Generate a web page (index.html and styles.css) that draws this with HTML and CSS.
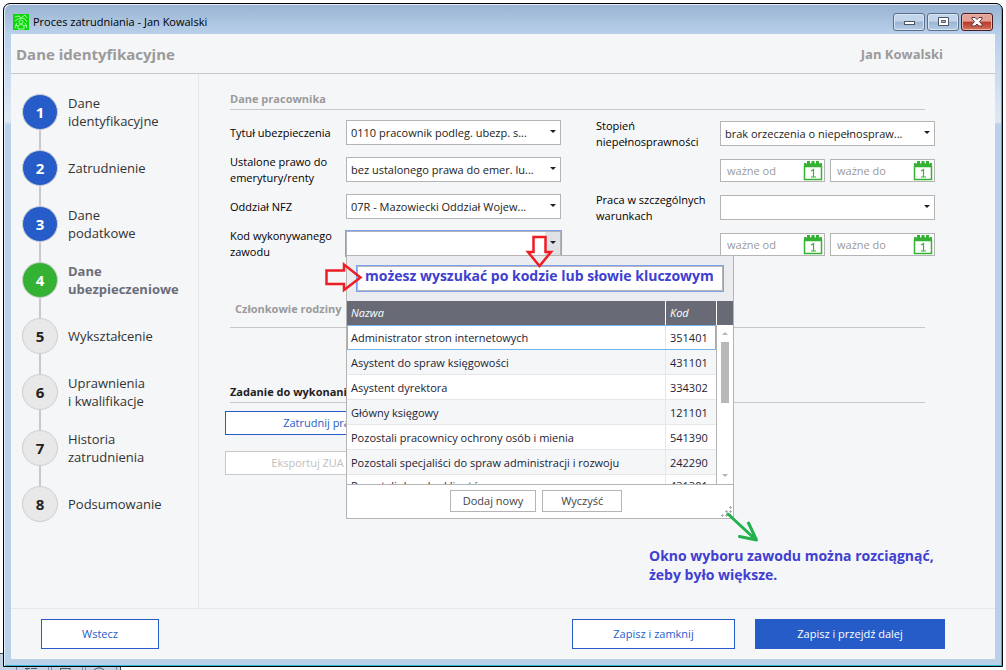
FILE: index.html
```html
<!DOCTYPE html>
<html lang="pl">
<head>
    <meta charset="UTF-8">
    <meta name="viewport" content="width=device-width, initial-scale=1.0">
    <link rel="stylesheet" href="styles.css">
    <title>Proces zatrudniania - Jan Kowalski</title>
</head>
<body>
    <!-- toolbar of the program behind the window -->
    <svg class="back-toolbar" width="121" height="17" viewBox="0 0 121 17" aria-hidden="true">
        <path d="M0 0h120v17H0z" fill="#c3d3e6"/>
        <path d="M0 .5h120.500V17" fill="none" stroke="#444"/>
        <path d="M16.500 10v7M48.500 10v7M51.500 10v7M82.500 10v7M85.500 10v7M116.500 10v7" stroke="#7d8fa8"/>
        <path d="M25 15.500h5M27 17v-2M31 15.500h6M60 15.500h10M60.500 17v-2M70 17v-2M94 17l3-2h4l3 2" fill="none" stroke="#555"/>
    </svg>

    <div class="window">
        <div class="titlebar">
            <svg class="app-icon" width="16" height="16" viewBox="0 0 16 16" aria-hidden="true">
                <path d="M0 0h16v16H0z" fill="#0bd80b"/>
                <path d="M2 3l4-1 2 2 4-3 2 3M2 7l3-2 3-1 4 1 2 3M8 6a2 2 0 1 0 .1 0M4 9l-2 5M12 9l2 5M5 15v-3l3-2 3 2v3zM2 11l3 1M14 11l-3 1" fill="none" stroke="#a6f7a0"/>
            </svg>
            <span class="titlebar-text">Proces zatrudniania - Jan Kowalski</span>
            <div class="window-buttons">
                <button class="win-btn" aria-label="Minimalizuj">
                    <svg width="12" height="10" viewBox="0 0 12 10"><rect x="1.500" y="4.500" width="10" height="3" fill="#fff" stroke="#4d5560"/></svg>
                </button>
                <button class="win-btn" aria-label="Maksymalizuj">
                    <svg width="12" height="10" viewBox="0 0 12 10"><path d="M1.500 .5h10v8h-10zM4.500 3.500v2h4v-2z" fill="#fff" fill-rule="evenodd" stroke="#4d5560"/></svg>
                </button>
                <button class="win-btn win-btn-close" aria-label="Zamknij">
                    <svg width="12" height="10" viewBox="0 0 12 10"><path d="M1 .5h3l2 2 2-2h3v1.500L8.500 4.500 11 7.500v1.500H8L6 7 4 9H1V7.500l2.500-3L1 2z" fill="#fff" stroke="#5b3a3f"/></svg>
                </button>
            </div>
        </div>

        <div class="client">
            <header class="page-header">
                <h1>Dane identyfikacyjne</h1>
                <span class="person">Jan Kowalski</span>
            </header>

            <div class="content">
                <ol class="steps">
                    <li class="step done"><span class="step-number">1</span><span>Dane<br>identyfikacyjne</span></li>
                    <li class="step done"><span class="step-number">2</span><span>Zatrudnienie</span></li>
                    <li class="step done"><span class="step-number">3</span><span>Dane<br>podatkowe</span></li>
                    <li class="step current"><span class="step-number">4</span><span>Dane<br>ubezpieczeniowe</span></li>
                    <li class="step"><span class="step-number">5</span><span>Wykształcenie</span></li>
                    <li class="step"><span class="step-number">6</span><span>Uprawnienia<br>i kwalifikacje</span></li>
                    <li class="step"><span class="step-number">7</span><span>Historia<br>zatrudnienia</span></li>
                    <li class="step"><span class="step-number">8</span><span>Podsumowanie</span></li>
                </ol>

                <main class="main">
                    <h2 class="section-title">Dane pracownika</h2>
                    <div class="form">
                        <div class="form-column">
                            <div class="row">
                                <label for="tytul">Tytuł ubezpieczenia</label>
                                <div class="select">
                                    <select id="tytul"><option>0110 pracownik podleg. ubezp. s...</option></select>
                                </div>
                            </div>
                            <div class="row">
                                <label for="prawo">Ustalone prawo do emerytury/renty</label>
                                <div class="select">
                                    <select id="prawo"><option>bez ustalonego prawa do emer. lu...</option></select>
                                </div>
                            </div>
                            <div class="row">
                                <label for="nfz">Oddział NFZ</label>
                                <div class="select">
                                    <select id="nfz"><option>07R - Mazowiecki Oddział Wojew...</option></select>
                                </div>
                            </div>
                            <div class="row">
                                <label for="kod">Kod wykonywanego zawodu</label>
                                <div class="select open">
                                    <select id="kod"><option></option></select>

                                    <div class="popup">
                                        <div class="popup-search">
                                            <input type="text" class="search-input" aria-label="Szukaj zawodu" value="możesz wyszukać po kodzie lub słowie kluczowym">
                                        </div>
                                        <div class="popup-list">
                                            <table class="jobs">
                                                <thead>
                                                    <tr><th>Nazwa</th><th class="code">Kod</th></tr>
                                                </thead>
                                                <tbody>
                                                    <tr class="selected"><td>Administrator stron internetowych</td><td>351401</td></tr>
                                                    <tr><td>Asystent do spraw księgowości</td><td>431101</td></tr>
                                                    <tr><td>Asystent dyrektora</td><td>334302</td></tr>
                                                    <tr><td>Główny księgowy</td><td>121101</td></tr>
                                                    <tr><td>Pozostali pracownicy ochrony osób i mienia</td><td>541390</td></tr>
                                                    <tr><td>Pozostali specjaliści do spraw administracji i rozwoju</td><td>242290</td></tr>
                                                    <tr><td>Pozostali doradcy klientów</td><td>431301</td></tr>
                                                </tbody>
                                            </table>
                                            <div class="scrollbar">
                                                <div class="scroll-head"></div>
                                                <div class="scroll-track">
                                                    <span class="scroll-arrow up"></span>
                                                    <span class="scroll-thumb"></span>
                                                    <span class="scroll-arrow down"></span>
                                                </div>
                                            </div>
                                        </div>
                                        <div class="popup-footer">
                                            <button class="small-btn">Dodaj nowy</button>
                                            <button class="small-btn">Wyczyść</button>
                                        </div>
                                        <svg class="grip" width="11" height="11" viewBox="0 0 11 11" aria-hidden="true">
                                            <path d="M8 1.500h3M9.500 0v3M4 5.500h3M5.500 4v3M8 5.500h3M9.500 4v3M0 9.500h3M1.500 8v3M4 9.500h3M5.500 8v3M8 9.500h3M9.500 8v3" stroke="#b0b0b0"/>
                                        </svg>

                                        <!-- hints: where to search, where to resize -->
                                        <svg class="hint-arrows" width="440" height="320" viewBox="0 0 440 320" aria-hidden="true">
                                            <path d="M213.500 7h12v15h5.500l-11.500 14-11.500-14h5.500z" fill="none" stroke="#ee1c24" stroke-width="2.500"/>
                                            <path d="M6.500 40.500h17.500v-6l16.500 13-16.500 12.500v-6h-17.500z" fill="none" stroke="#ee1c24" stroke-width="2.500"/>
                                            <path d="M408 284l28 26M428.500 293l8 17-17-3.500" fill="none" stroke="#22b14c" stroke-width="3" stroke-linecap="round" stroke-linejoin="round"/>
                                        </svg>
                                        <p class="hint-text">Okno wyboru zawodu można rozciągnąć,<br>żeby było większe.</p>
                                    </div>
                                </div>
                            </div>
                        </div>

                        <div class="form-column form-column-right">
                            <div class="row">
                                <label for="stopien">Stopień niepełnosprawności</label>
                                <div class="select">
                                    <select id="stopien"><option>brak orzeczenia o niepełnospraw...</option></select>
                                </div>
                            </div>
                            <div class="row">
                                <span></span>
                                <div class="dates">
                                    <div class="date">
                                        <input type="text" placeholder="ważne od" aria-label="Stopień niepełnosprawności ważne od">
                                        <button class="calendar" aria-label="Kalendarz"></button>
                                    </div>
                                    <div class="date">
                                        <input type="text" placeholder="ważne do" aria-label="Stopień niepełnosprawności ważne do">
                                        <button class="calendar" aria-label="Kalendarz"></button>
                                    </div>
                                </div>
                            </div>
                            <div class="row">
                                <label for="warunki">Praca w szczególnych warunkach</label>
                                <div class="select">
                                    <select id="warunki"><option></option></select>
                                </div>
                            </div>
                            <div class="row">
                                <span></span>
                                <div class="dates">
                                    <div class="date">
                                        <input type="text" placeholder="ważne od" aria-label="Praca w szczególnych warunkach ważne od">
                                        <button class="calendar" aria-label="Kalendarz"></button>
                                    </div>
                                    <div class="date">
                                        <input type="text" placeholder="ważne do" aria-label="Praca w szczególnych warunkach ważne do">
                                        <button class="calendar" aria-label="Kalendarz"></button>
                                    </div>
                                </div>
                            </div>
                        </div>
                    </div>

                    <h2 class="section-title family">Członkowie rodziny</h2>

                    <h2 class="section-title tasks">Zadanie do wykonania</h2>
                    <div class="task-buttons">
                        <button class="btn task-btn">Zatrudnij pracownika</button>
                        <button class="btn task-btn" disabled>Eksportuj ZUA do Płatnika</button>
                    </div>
                </main>
            </div>

            <footer class="page-footer">
                <button class="btn back">Wstecz</button>
                <button class="btn save">Zapisz i zamknij</button>
                <button class="btn next">Zapisz i przejdź dalej</button>
            </footer>
        </div>
    </div>

    <script>
        // every date field gets the same calendar icon
        document.querySelectorAll('.calendar').forEach((button) => {
            button.innerHTML = `
              <svg width="20" height="20" viewBox="0 0 20 20">
                <path d="M1.500 5.500h17v13h-17z" fill="#fff" stroke="#35b233" stroke-width="1.500"/>
                <path d="M1 2h18v4H1z" fill="#35b233"/>
                <path d="M5.500 0v3M10 0v3M14.500 0v3" stroke="#35b233" stroke-width="3"/>
                <path d="M3.500 1v1.500M7.500 1v1.500M12.500 1v1.500M16.500 1v1.500" stroke="#fff"/>
                <path d="M8 10l2.500-1.500V16M8 16h5" fill="none" stroke="#35b233" stroke-width="1.200"/>
              </svg>`;
        });
    </script>
</body>
</html>
```
FILE: styles.css
```css
* {
    box-sizing: border-box;
}

body {
    margin: 0;
    padding: 3px;
    min-height: 100vh;
    display: flex;
    background-color: #fff;
    font-family: "Open Sans", "Noto Sans", sans-serif;
    font-size: 11px;
    line-height: 16px;
    color: #1e1e1e;
}

button, input, select {
    font: inherit;
    color: inherit;
}

h1, h2, p, ol {
    margin: 0;
    padding: 0;
}

.back-toolbar {
    position: absolute;
    left: 0;
    bottom: 0;
}

/* window frame */
.window {
    position: relative;
    flex: 1;
    display: flex;
    flex-direction: column;
    padding: 0 7px 7px;
    border: 1px solid #000;
    border-radius: 7px 7px 0 0;
    background: linear-gradient(#98b3d1, #b9d0ea 30px, #dfe9f5 118px, #bad1ea 120px);
    box-shadow: inset 1px 1px #e4eefa, inset -1px -1px #2fb9d6;
}

.titlebar {
    display: flex;
    align-items: center;
    height: 30px;
    padding: 6px 2px 0;
    gap: 4px;
    color: #000;
}

.window-buttons {
    display: flex;
    gap: 2px;
    margin-left: auto;
}

.win-btn {
    display: flex;
    align-items: center;
    justify-content: center;
    width: 32px;
    height: 18px;
    padding: 0;
    border: 1px solid #5b6f8a;
    border-radius: 3px;
    background: linear-gradient(#c3d5ea 45%, #9bb5d2 50%, #b5cce6);
    box-shadow: inset 0 0 0 1px #d6e4f4;
}

.win-btn-close {
    border-color: #4a1b20;
    background: linear-gradient(#e3a296 45%, #b8382a 50%, #d2745a);
    box-shadow: inset 0 0 0 1px #e7b5a8;
}

.client {
    flex: 1;
    display: flex;
    flex-direction: column;
    background-color: #f5f6f8;
}

.page-header {
    display: flex;
    justify-content: space-between;
    align-items: center;
    height: 40px;
    padding: 1px 52px 0 5px;
    border-bottom: 1px solid #c8c8c8;
    color: #9a9a9a;
}

.page-header h1 {
    font-size: 15px;
    line-height: 20px;
}

.person {
    font-size: 13px;
    font-weight: bold;
}

.content {
    flex: 1;
    display: flex;
}

/* steps on the left */
.steps {
    width: 188px;
    padding: 10px 0 0 11px;
    border-right: 1px solid #e6e7e9;
    list-style: none;
    font-size: 13px;
    line-height: 18px;
    color: #333;
}

.step {
    position: relative;
    display: flex;
    align-items: center;
    gap: 10px;
    height: 56px;
}

/* line to the next circle */
.step:not(:last-child)::after {
    content: "";
    position: absolute;
    left: 17px;
    top: 46px;
    width: 2px;
    height: 20px;
    background-color: #c8c8c8;
}

.step-number {
    display: flex;
    align-items: center;
    justify-content: center;
    width: 36px;
    height: 36px;
    border: 1px solid #cfcfcf;
    border-radius: 50%;
    background-color: #e8e8e8;
    font-size: 15px;
    font-weight: bold;
    color: #222;
}

.done .step-number {
    background-color: #255cc7;
    color: #fff;
}

.current .step-number {
    background-color: #35b233;
    color: #fff;
}

.current {
    font-weight: bold;
    color: #6b6e79;
}

/* form */
.main {
    flex: 1;
    padding: 16px 60px 0 31px;
}

.section-title {
    margin-right: 10px;
    padding-bottom: 2px;
    border-bottom: 1px solid #c8c8c8;
    font-size: 11px;
    line-height: 17px;
    color: #9a9a9a;
}

.form {
    display: flex;
    justify-content: space-between;
    gap: 35px;
    padding-top: 6px;
}

.form-column {
    display: flex;
    flex-direction: column;
    gap: 4px;
}

.form-column-right {
    padding-top: 1px;
}

.row {
    display: grid;
    grid-template-columns: 116px 215px;
    align-items: center;
    height: 33px;
    color: #000;
}

.form-column-right .row {
    grid-template-columns: 124px 215px;
}

.select {
    position: relative;
}

.select select {
    display: block;
    appearance: none;
    width: 100%;
    height: 25px;
    padding: 0 16px 0 4px;
    border: 1px solid #b4b4b4;
    border-radius: 0;
    background-color: #fff;
    color: #222;
}

.select::after {
    content: "";
    position: absolute;
    right: 5px;
    top: 10px;
    border: 3px solid transparent;
    border-top-color: #1e1e2d;
    border-bottom: 0;
}

.open select {
    outline: 1px solid #7da2f0;
    background: linear-gradient(to right, #fff 198px, #dfe1e5 198px);
}

.dates {
    display: grid;
    grid-template-columns: repeat(2, minmax(0, 1fr));
    gap: 5px;
}

.date {
    display: flex;
    align-items: center;
    height: 23px;
    padding-right: 1px;
    border: 1px solid #b4b4b4;
    background-color: #fff;
}

.date input {
    flex: 1;
    min-width: 0;
    padding: 0 0 0 6px;
    border: 0;
    background: none;
}

.date input::placeholder {
    color: #999;
}

.calendar {
    display: flex;
    padding: 0;
    border: 0;
    background: none;
}

/* job picker */
.popup {
    position: absolute;
    z-index: 1;
    left: 0;
    top: 24px;
    width: 388px;
    border: 1px solid #b4b4b4;
    background-color: #fff;
    color: #222233;
}

.popup-search {
    padding: 10px;
    background-color: #ebecef;
}

.search-input {
    display: block;
    width: 100%;
    height: 25px;
    padding: 0 7px 6px;
    border: 1px solid #b4b4b4;
    outline: 1px solid #7da2f0;
    background-color: #fff;
    font-size: 14px;
    font-weight: bold;
    color: #4040d0;
}

.popup-list {
    display: flex;
    height: 184px;
    overflow: hidden;
    border-bottom: 1px solid #b4b4b4;
}

.jobs {
    flex: 1;
    border-collapse: separate;
    border-spacing: 0;
}

.jobs th {
    height: 24px;
    padding: 0 4px;
    background-color: #686b76;
    font-style: italic;
    font-weight: normal;
    text-align: left;
    color: #fff;
}

.jobs .code {
    width: 51px;
    border-left: 1px solid #fff;
}

.jobs td {
    height: 25px;
    padding: 1px 4px 0;
    border-bottom: 1px solid #e6e7e9;
    white-space: nowrap;
}

.jobs tr:last-child td {
    height: 21px;
}

.jobs td + td {
    border-left: 1px solid #e6e7e9;
}

.jobs tbody tr:nth-child(even) {
    background-color: #f5f6f8;
}

.jobs .selected {
    outline: 1px solid #78b4ea;
    outline-offset: -1px;
}

.scrollbar {
    display: flex;
    flex-direction: column;
    width: 17px;
}

.scroll-head {
    height: 24px;
    border-left: 1px solid #fff;
    background-color: #686b76;
}

.scroll-track {
    flex: 1;
    display: flex;
    flex-direction: column;
    align-items: center;
    padding: 7px 0;
    border-left: 1px solid #b4b4b4;
}

.scroll-arrow {
    border: 3px solid transparent;
}

.scroll-arrow.up {
    border-top: 0;
    border-bottom-color: #b4b4b4;
}

.scroll-arrow.down {
    margin-top: auto;
    border-bottom: 0;
    border-top-color: #b4b4b4;
}

.scroll-thumb {
    width: 8px;
    height: 61px;
    margin-top: 7px;
    background-color: #b8b8b8;
}

.popup-footer {
    display: flex;
    justify-content: center;
    gap: 6px;
    padding: 5px 8px 6px 0;
}

.small-btn {
    min-width: 80px;
    height: 22px;
    padding: 0 12px;
    border: 1px solid #b4b4b4;
    background-color: #fff;
    color: #444;
}

.grip {
    position: absolute;
    right: 1px;
    bottom: 1px;
}

.hint-arrows {
    position: absolute;
    left: -27px;
    top: -26px;
    pointer-events: none;
}

.hint-text {
    position: absolute;
    left: 302px;
    top: 290px;
    font-size: 14px;
    line-height: 19px;
    font-weight: bold;
    white-space: nowrap;
    color: #4040d0;
}

/* lower sections */
.family {
    margin-top: 39px;
    padding: 0 0 10px 5px;
}

.tasks {
    margin-top: 55px;
    color: #1e1e1e;
}

.task-buttons {
    display: flex;
    flex-direction: column;
    gap: 16px;
    width: 225px;
    margin: 8px 0 0 -5px;
}

.btn {
    height: 30px;
    border: 1px solid #255cc7;
    background-color: #fff;
    color: #255cc7;
}

.task-btn {
    height: 24px;
}

.btn:disabled {
    border-color: #c8c8c8;
    color: #c0c0c0;
}

.page-footer {
    display: flex;
    align-items: center;
    gap: 20px;
    height: 51px;
    padding: 0 50px 0 30px;
    border-top: 1px solid #e6e7e9;
}

.back {
    width: 118px;
    margin-right: auto;
}

.save {
    width: 163px;
}

.next {
    width: 190px;
    background-color: #255cc7;
    color: #fff;
}
```
